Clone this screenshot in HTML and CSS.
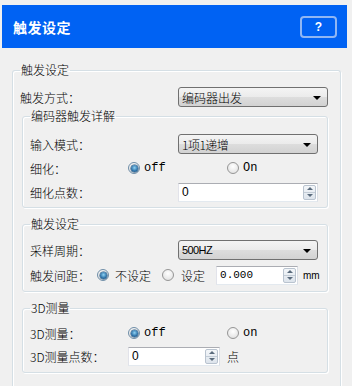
FILE: index.html
```html
<!DOCTYPE html>
<html>
<head>
<meta charset="utf-8">
<link rel="stylesheet" href="styles.css">
</head>
<body>
<div class="header">
  <span class="title">触发设定</span>
  <span class="help">?</span>
</div>
<fieldset class="group outer">
  <legend>触发设定</legend>
  <div class="row r-first">
    <span class="lbl w158">触发方式：</span>
    <div class="combo wide"><span>编码器出发</span><i class="arrow"></i></div>
  </div>
  <fieldset class="group g1">
    <legend>编码器触发详解</legend>
    <div class="rows gap4">
      <div class="row">
        <span class="lbl w148">输入模式：</span>
        <div class="combo w140"><span class="num">1项1递增</span><i class="arrow"></i></div>
      </div>
      <div class="row">
        <span class="lbl w98">细化：</span>
        <span class="opt w99"><i class="radio on"></i><span class="mono">off</span></span>
        <span class="opt"><i class="radio"></i><span class="mono">On</span></span>
      </div>
      <div class="row">
        <span class="lbl w148">细化点数：</span>
        <div class="spin w140"><span class="val">0</span><span class="spinbtn"><i class="up"></i><i class="down"></i></span></div>
      </div>
    </div>
  </fieldset>
  <fieldset class="group g2">
    <legend>触发设定</legend>
    <div class="rows gap5">
      <div class="row">
        <span class="lbl w148">采样周期：</span>
        <div class="combo w140"><span class="hz">500HZ</span><i class="arrow"></i></div>
      </div>
      <div class="row">
        <span class="lbl w67">触发间距：</span>
        <span class="opt wide-gap"><i class="radio on"></i><span>不设定</span></span>
        <span class="opt wide-gap2"><i class="radio"></i><span>设定</span></span>
        <div class="spin w82"><span class="val small">0.000</span><span class="spinbtn"><i class="up"></i><i class="down"></i></span></div>
        <span class="unit">mm</span>
      </div>
    </div>
  </fieldset>
  <fieldset class="group g3">
    <legend>3D测量</legend>
    <div class="rows gap3">
      <div class="row">
        <span class="lbl w98">3D测量：</span>
        <span class="opt w99"><i class="radio on"></i><span class="mono">off</span></span>
        <span class="opt"><i class="radio"></i><span class="mono">on</span></span>
      </div>
      <div class="row">
        <span class="lbl w98">3D测量点数：</span>
        <div class="spin w92"><span class="val">0</span><span class="spinbtn"><i class="up"></i><i class="down"></i></span></div>
        <span class="pt">点</span>
      </div>
    </div>
  </fieldset>
</fieldset>
</body>
</html>
```
FILE: styles.css
```css
* { box-sizing: border-box; }
body {
  margin: 0;
  width: 352px;
  height: 386px;
  overflow: hidden;
  background: #f0f0f0;
  font-family: "Noto Sans CJK SC", "Liberation Sans", sans-serif;
  font-size: 12px;
  font-weight: 300;
  color: #000;
}
.header {
  margin: 5px 5px 0 2px;
  height: 43px;
  background: #0062f3;
  display: flex;
  align-items: center;
  justify-content: space-between;
  padding: 0 10px 0 11px;
}
.title {
  color: #fff;
  font-weight: bold;
  font-size: 14px;
  letter-spacing: 0.5px;
}
.help {
  width: 37px;
  height: 22px;
  border: 2px solid #8fb6f3;
  border-radius: 4px;
  color: #fff;
  font-family: "Liberation Sans", sans-serif;
  font-weight: bold;
  font-size: 12px;
  display: flex;
  align-items: center;
  justify-content: center;
  margin-top: 1px;
}
fieldset.group {
  min-width: 0;
  border: 1px solid #d5dfe5;
  border-radius: 3px;
  box-shadow: inset 1px 1px 0 #fff, 1px 1px 0 #fff;
}
legend {
  padding: 0 1px;
  height: 16px;
  line-height: 16px;
}
fieldset.outer {
  margin: 14px 11px 0 12px;
  padding: 9px 12px 13px 7px;
  border-bottom-width: 0;
  border-radius: 3px 3px 0 0;
}
fieldset.g1 { margin: 1px 0 0 2px; padding: 10px 9px 5px 7px; }
fieldset.g2 { margin: 8px 0 0 2px; padding: 8px 9px 6px 7px; }
fieldset.g3 { margin: 8px 0 0 2px; padding: 7px 9px 6px 7px; }
.rows { display: flex; flex-direction: column; }
.gap4 { gap: 4px; }
.gap5 { gap: 5px; }
.gap3 { gap: 3px; }
.row {
  display: flex;
  align-items: center;
  height: 20px;
}
.lbl { flex: none; white-space: nowrap; }
.w158 { width: 158px; }
.w148 { width: 148px; }
.w98 { width: 98px; }
.w99 { width: 99px; }
.w67 { width: 67px; }
.w140 { width: 140px; }
.w82 { width: 82px; }
.w92 { width: 92px; }
.combo {
  height: 20px;
  border: 1px solid #707070;
  border-radius: 3px;
  background: linear-gradient(#f4f4f4, #ebebeb 50%, #dddddd 51%, #d2d2d2);
  display: flex;
  align-items: center;
  justify-content: space-between;
  padding: 0 6px 0 3px;
}
.combo.wide { flex: 1; }
.num { letter-spacing: -0.5px; }
.hz { font-family: "Liberation Sans", sans-serif; font-weight: normal; font-size: 11px; letter-spacing: -0.6px; }
.arrow {
  width: 0;
  height: 0;
  border-left: 4px solid transparent;
  border-right: 4px solid transparent;
  border-top: 4px solid #000;
  margin-top: 1px;
}
.opt {
  display: flex;
  align-items: center;
  flex: none;
}
.radio {
  position: relative;
  width: 12px;
  height: 12px;
  border-radius: 50%;
  border: 1px solid #959595;
  background: radial-gradient(circle at 50% 35%, #ffffff, #dcdcdc);
  margin-right: 4px;
  flex: none;
}
.radio.on {
  border-color: #6f8ea8;
}
.radio.on::after {
  content: "";
  position: absolute;
  left: 1.5px;
  top: 1.5px;
  width: 7px;
  height: 7px;
  border-radius: 50%;
  background: radial-gradient(circle at 50% 40%, #8fd3f5, #2c6fa5 60%, #184f7d);
  box-shadow: 0 0 0 0.5px #1d4e7a;
}
.mono { font-family: "Liberation Mono", monospace; font-weight: normal; font-size: 12px; }
.wide-gap .radio { margin-right: 6px; }
.wide-gap { margin-right: 11px; }
.wide-gap2 .radio { margin-right: 7px; }
.wide-gap2 { margin-right: 11px; }
.spin {
  height: 19px;
  background: #fff;
  border: 1px solid #abadb3;
  border-color: #abadb3 #dbdfe6 #e3e9ef #e2e3ea;
  display: flex;
  align-items: center;
  justify-content: space-between;
  padding: 0 1px 0 3px;
  flex: none;
}
.val { font-family: "Liberation Sans", sans-serif; font-weight: normal; font-size: 12px; }
.val.small { font-family: "Liberation Mono", monospace; font-size: 11px; }
.spinbtn {
  width: 13px;
  height: 15px;
  display: flex;
  flex-direction: column;
  border: 1px solid #b9c3cf;
  border-radius: 2px;
  background: linear-gradient(#f3f6f9, #dde4ec);
}
.spinbtn i {
  flex: 1;
  display: flex;
  align-items: center;
  justify-content: center;
}
.spinbtn i::after {
  content: "";
  border-left: 3px solid transparent;
  border-right: 3px solid transparent;
}
.spinbtn .up { border-bottom: 1px solid #c3ccd6; }
.spinbtn .up::after { border-bottom: 3px solid #5a6b7d; }
.spinbtn .down::after { border-top: 3px solid #5a6b7d; }
.unit { margin-left: 5px; font-size: 10px; font-weight: normal; font-family: "Liberation Sans", sans-serif; }
.pt { margin-left: 7px; }
```
